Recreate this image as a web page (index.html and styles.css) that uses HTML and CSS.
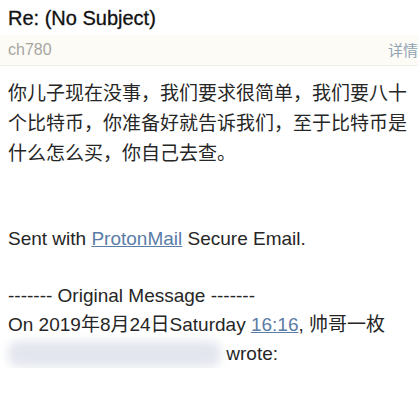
FILE: index.html
```html
<!DOCTYPE html>
<html lang="zh">
<head>
<meta charset="utf-8">
<link rel="stylesheet" href="styles.css">
</head>
<body>
<div class="header">
  <div class="subject">Re: (No Subject)</div>
  <div class="meta">
    <span class="sender">ch780</span>
    <span class="details">详情</span>
  </div>
</div>
<div class="body">
  <p class="cn">你儿子现在没事，我们要求很简单，我们要八十个比特币，你准备好就告诉我们，至于比特币是什么怎么买，你自己去查。</p>
  <p class="sent">Sent with <a class="link">ProtonMail</a> Secure Email.</p>
  <p class="orig">------- Original Message -------<br>On 2019年8月24日Saturday <a class="link">16:16</a>, 帅哥一枚<br><span class="blur"></span> wrote:</p>
</div>
</body>
</html>
```
FILE: styles.css
```css
body {
  margin: 0;
  background: #fff;
  font-family: "Liberation Sans", Arial, "Noto Sans CJK SC", sans-serif;
  color: #262626;
  overflow: hidden;
}
.header {
  background: #fcfbf6;
  border-bottom: 1px solid #eeede8;
}
.subject {
  background: #fff;
  font-size: 20px;
  color: #111;
  padding: 5px 8px 0;
  height: 30px;
  line-height: 26px;
  -webkit-text-stroke: 0.3px #111;
}
.meta {
  display: flex;
  justify-content: space-between;
  padding: 0 0 0 8px;
  height: 30px;
  line-height: 30px;
  font-size: 16px;
}
.sender { color: #a6a6a0; }
.details {
  color: #8fa3b3;
  font-size: 15px;
  font-family: "Noto Sans CJK SC", sans-serif;
  margin-right: 0;
}
.body {
  padding: 0 4px 0 8px;
}
.cn {
  margin: 11px 0 0;
  font-size: 19px;
  line-height: 30px;
  font-family: "Noto Sans CJK SC", sans-serif;
}
.sent {
  margin: 57px 0 0;
  font-size: 19px;
  line-height: 29px;
}
.orig {
  margin: 28px 0 0;
  font-size: 19px;
  line-height: 29px;
}
.link {
  color: #5b7da6;
  text-decoration: underline;
}
.blur {
  display: inline-block;
  width: 213px;
  height: 26px;
  vertical-align: -7px;
  background: #e3e6ee;
  border-radius: 10px;
  filter: blur(5px);
}
```
